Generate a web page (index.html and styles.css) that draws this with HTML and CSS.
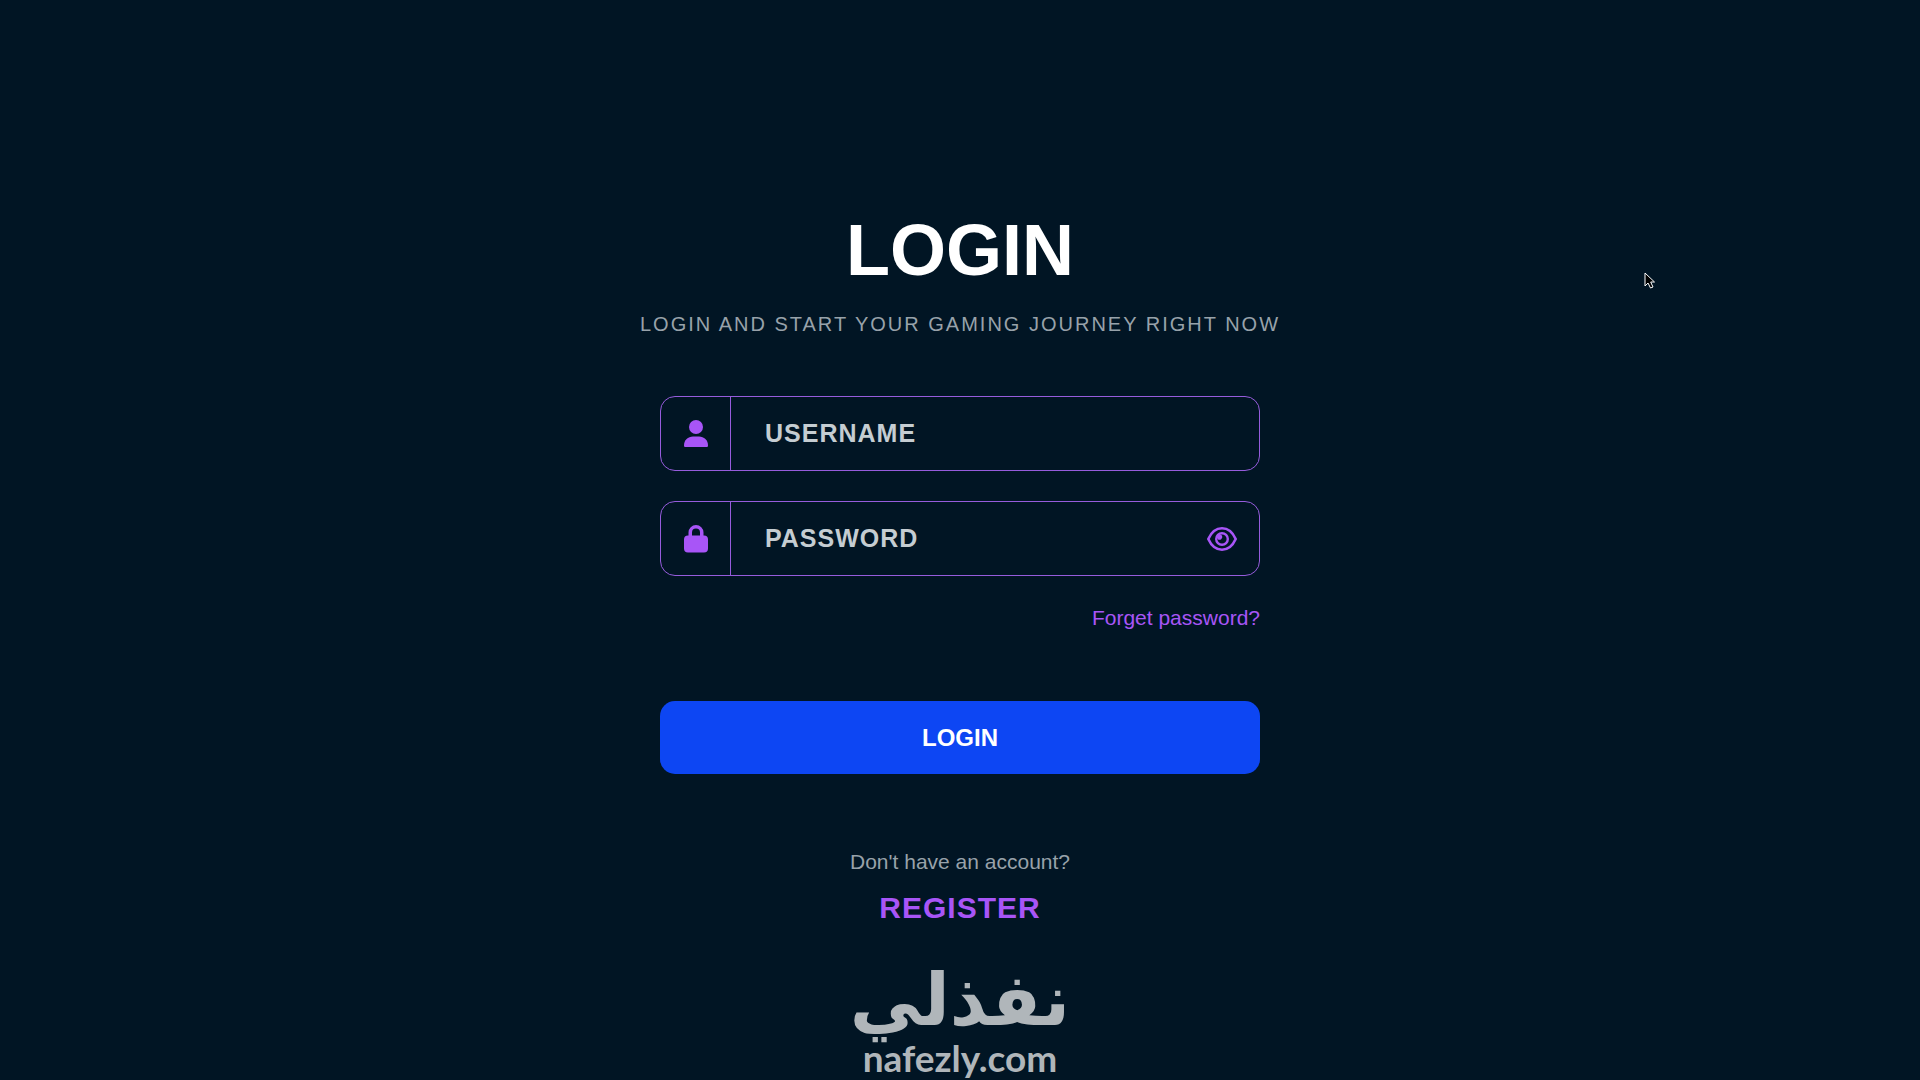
FILE: index.html
```html
<!DOCTYPE html>
<html lang="en">
<head>
  <meta charset="UTF-8" />
  <meta name="viewport" content="width=device-width, initial-scale=1.0"/>
  <title>Login</title>
  <link rel="stylesheet" href="styles.css">
</head>
<body>

  <main class="page">
    <h1>LOGIN</h1>
    <p class="subtitle">LOGIN AND START YOUR GAMING JOURNEY RIGHT NOW</p>

    <form class="login-form">
      <div class="field">
        <label for="username" class="field-icon" aria-label="Username">
          <svg width="24" height="28" viewBox="0 0 24 28" fill="currentColor">
            <circle cx="12" cy="7" r="7"/>
            <path d="M0 25.5C0 20 4 16.5 9 16.5h6c5 0 9 3.500 9 9 0 1-.6 1.500-1.500 1.500h-21C.6 27 0 26.500 0 25.500z"/>
          </svg>
        </label>
        <input type="text" id="username" placeholder="USERNAME">
      </div>

      <div class="field">
        <label for="password" class="field-icon" aria-label="Password">
          <svg width="24" height="28" viewBox="0 0 24 28" fill="currentColor">
            <path fill-rule="evenodd" d="M4.500 10.500V7.500a7.500 7.500 0 0 1 15 0v3H20a4 4 0 0 1 4 4v9a4 4 0 0 1-4 4H4a4 4 0 0 1-4-4v-9a4 4 0 0 1 4-4zM8 10.500h8V7.500a4 4 0 0 0-8 0z"/>
          </svg>
        </label>
        <input type="password" id="password" placeholder="PASSWORD">
        <button type="button" class="eye" id="togglePassword" aria-label="Show password">
          <svg width="30" height="24" viewBox="0 0 30 24" fill="none" stroke="currentColor">
            <path stroke-width="2.600" stroke-linejoin="round" d="M1.300 12C4 6 9 1.300 15 1.300S26 6 28.700 12C26 18 21 22.700 15 22.700S4 18 1.300 12z"/>
            <circle cx="15" cy="12" r="5.800" stroke-width="2.400"/>
            <path fill="currentColor" stroke="none" d="M15 8.500a3 3 0 0 1-4 4L9.500 10 12 7z"/>
          </svg>
        </button>
      </div>

      <a href="#" class="forget">Forget password?</a>
      <button type="submit" class="login-btn">LOGIN</button>
    </form>

    <p class="account">Don't have an account?</p>
    <a href="#" class="register">REGISTER</a>

    <div class="brand">
      <span class="brand-ar" lang="ar" dir="rtl">نفذلي</span>
      <span class="brand-en">nafezly.com</span>
    </div>
  </main>

  <svg class="cursor" width="12" height="18" viewBox="0 0 12 18">
    <path fill="#000" stroke="#fff" d="M1 1v13l3-3 2.500 5 2.500-1-2.300-5H10.500z"/>
  </svg>

  <script>
    document.getElementById("togglePassword").addEventListener("click", () => {
      const input = document.getElementById("password");
      input.type = input.type === "password" ? "text" : "password";
    });
  </script>

</body>
</html>
```
FILE: styles.css
```css
* { box-sizing: border-box; }

body {
  margin: 0;
  font-family: 'Liberation Sans', Arial, sans-serif;
  font-size: 21px;
  line-height: 28px;
  background-color: #011524;
  color: #98a2aa;
}

.page {
  min-height: 100vh;
  padding: 210px 20px 0;
  display: flex;
  flex-direction: column;
  align-items: center;
  text-align: center;
}

h1 {
  margin: 0 0 20px;
  font-size: 72px;
  line-height: 80px;
  color: white;
}

p { margin: 0; }

.subtitle {
  font-size: 20px;
  letter-spacing: 2px;
  margin-bottom: 58px;
}

.login-form {
  width: 100%;
  max-width: 600px;
  display: flex;
  flex-direction: column;
}

.field {
  display: flex;
  height: 75px;
  margin-bottom: 30px;
  border: 1px solid #965cdc;
  border-radius: 15px;
  color: #a855f7;
}

.field-icon {
  width: 70px;
  display: flex;
  align-items: center;
  justify-content: center;
  border-right: 1px solid #965cdc;
}

.field input {
  flex: 1;
  min-width: 0;
  padding: 0 34px;
  background: transparent;
  border: none;
  outline: none;
  color: #c5cdd2;
  font-family: inherit;
  font-size: 25px;
  font-weight: bold;
  letter-spacing: 1px;
}

.field input::placeholder {
  color: #c5cdd2;
  opacity: 1;
}

.eye {
  display: flex;
  align-items: center;
  padding: 0 22px;
  background: none;
  border: none;
  color: inherit;
  cursor: pointer;
}

.forget {
  align-self: flex-end;
  margin-bottom: 71px;
  line-height: 24px;
  color: #a855f7;
  text-decoration: none;
}

.login-btn {
  height: 73px;
  margin-bottom: 74px;
  background-color: #0d46f3;
  color: white;
  border: none;
  border-radius: 15px;
  font-family: inherit;
  font-size: 24px;
  font-weight: bold;
  cursor: pointer;
}

.login-btn:hover { background-color: #0a3bd0; }

.register {
  margin-top: 14px;
  font-size: 30px;
  line-height: 36px;
  font-weight: bold;
  letter-spacing: 1px;
  color: #a855f7;
  text-decoration: none;
}

.brand {
  display: flex;
  flex-direction: column;
  align-items: center;
  margin-top: 36px;
  color: #b0b6ba;
  font-weight: bold;
}

.brand-ar {
  font-family: 'DejaVu Sans', sans-serif;
  font-size: 72px;
  line-height: 76px;
}

.brand-en {
  font-family: 'Lato', sans-serif;
  font-size: 37px;
  line-height: 40px;
}

.cursor {
  position: absolute;
  left: 85.600%;
  top: 272px;
}
```
